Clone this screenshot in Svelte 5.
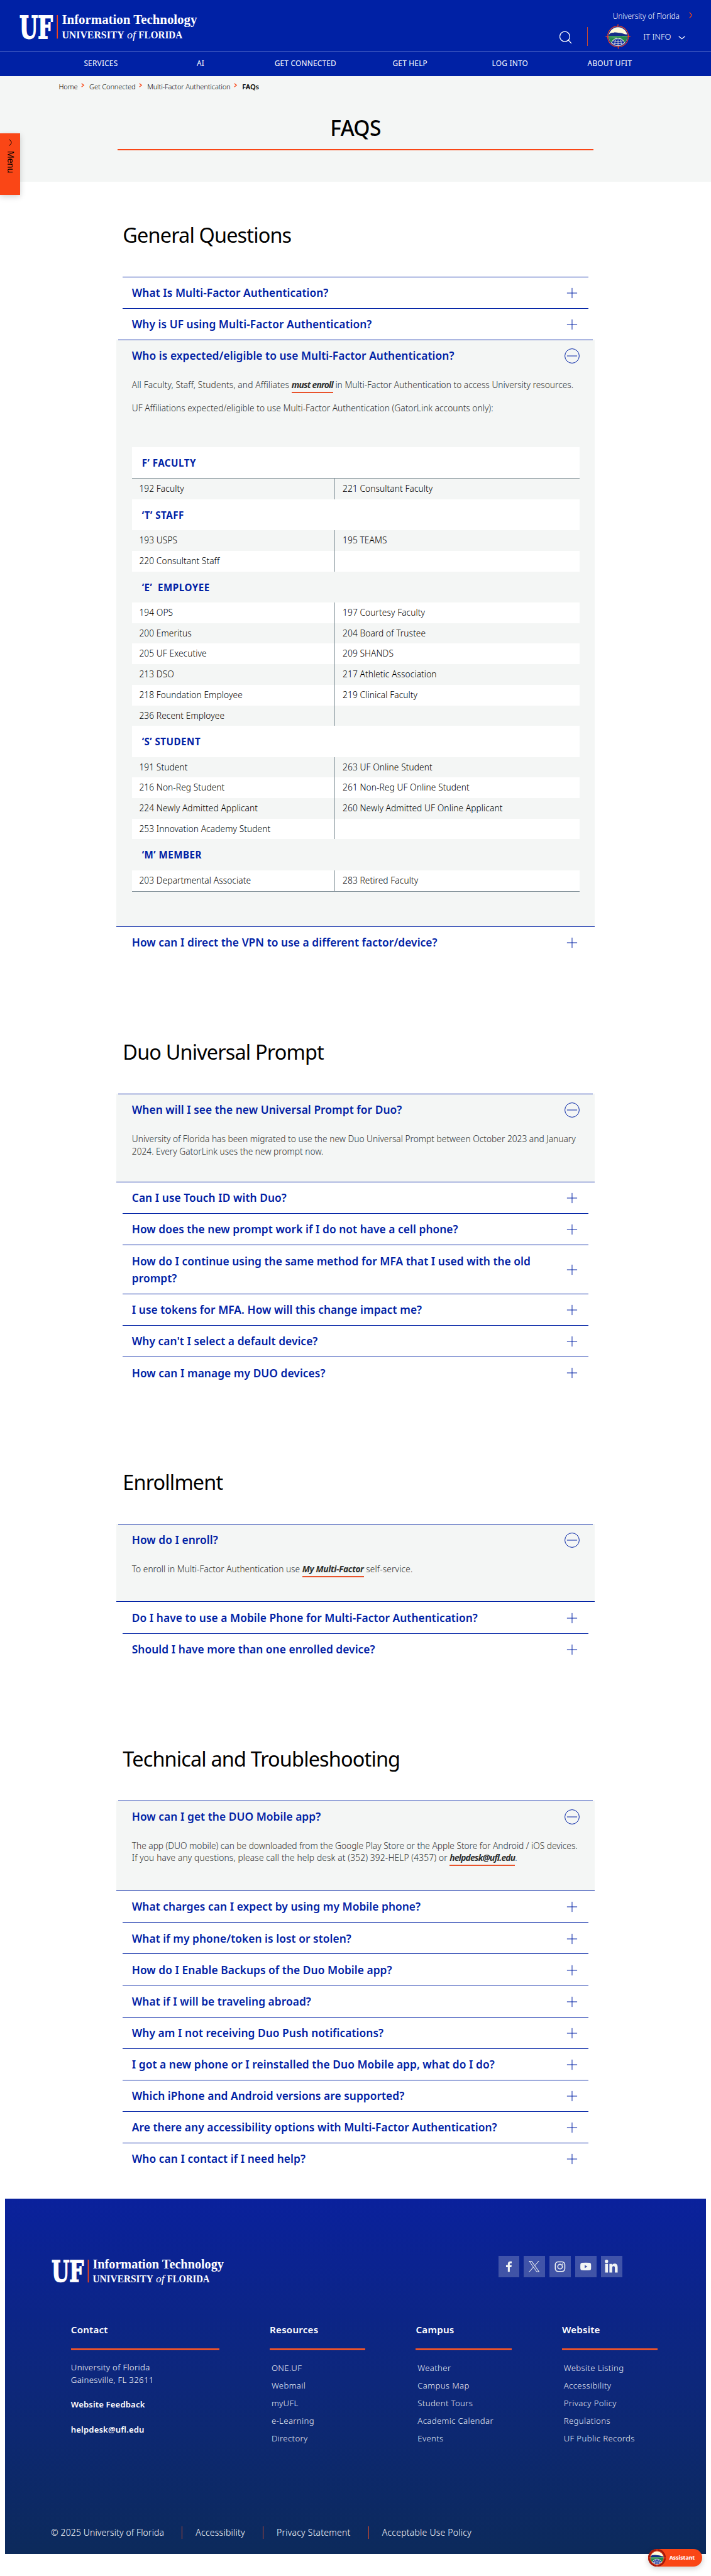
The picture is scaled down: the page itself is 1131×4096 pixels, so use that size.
<script>
  const nav = ['Services', 'AI', 'Get Connected', 'Get Help', 'Log Into', 'About UFIT'];
  const crumbs = ['Home', 'Get Connected', 'Multi-Factor Authentication'];

  const affiliations = [
    { title: 'F’ FACULTY', rows: [['192 Faculty', '221 Consultant Faculty']] },
    { title: '‘T’ STAFF', rows: [['193 USPS', '195 TEAMS'], ['220 Consultant Staff', '']] },
    {
      title: '‘E’\u00a0 EMPLOYEE',
      rows: [
        ['194 OPS', '197 Courtesy Faculty'],
        ['200 Emeritus', '204 Board of Trustee'],
        ['205 UF Executive', '209 SHANDS'],
        ['213 DSO', '217 Athletic Association'],
        ['218 Foundation Employee', '219 Clinical Faculty'],
        ['236 Recent Employee', '']
      ]
    },
    {
      title: '‘S’ STUDENT',
      rows: [
        ['191 Student', '263 UF Online Student'],
        ['216 Non-Reg Student', '261 Non-Reg UF Online Student'],
        ['224 Newly Admitted Applicant', '260 Newly Admitted UF Online Applicant'],
        ['253 Innovation Academy Student', '']
      ]
    },
    { title: '‘M’ MEMBER', rows: [['203 Departmental Associate', '283 Retired Faculty']] }
  ];
  const tableRows = affiliations.flatMap((g) => [{ head: g.title }, ...g.rows.map((cells) => ({ cells }))]);

  const sections = [
    {
      title: 'General Questions',
      open: 2,
      body: 'general',
      items: [
        'What Is Multi-Factor Authentication?',
        'Why is UF using Multi-Factor Authentication?',
        'Who is expected/eligible to use Multi-Factor Authentication?',
        'How can I direct the VPN to use a different factor/device?'
      ]
    },
    {
      title: 'Duo Universal Prompt',
      open: 0,
      body: 'prompt',
      items: [
        'When will I see the new Universal Prompt for Duo?',
        'Can I use Touch ID with Duo?',
        'How does the new prompt work if I do not have a cell phone?',
        'How do I continue using the same method for MFA that I used with the old prompt?',
        'I use tokens for MFA. How will this change impact me?',
        "Why can't I select a default device?",
        'How can I manage my DUO devices?'
      ]
    },
    {
      title: 'Enrollment',
      open: 0,
      body: 'enroll',
      items: [
        'How do I enroll?',
        'Do I have to use a Mobile Phone for Multi-Factor Authentication?',
        'Should I have more than one enrolled device?'
      ]
    },
    {
      title: 'Technical and Troubleshooting',
      open: 0,
      body: 'app',
      items: [
        'How can I get the DUO Mobile app?',
        'What charges can I expect by using my Mobile phone?',
        'What if my phone/token is lost or stolen?',
        'How do I Enable Backups of the Duo Mobile app?',
        'What if I will be traveling abroad?',
        'Why am I not receiving Duo Push notifications?',
        'I got a new phone or I reinstalled the Duo Mobile app, what do I do?',
        'Which iPhone and Android versions are supported?',
        'Are there any accessibility options with Multi-Factor Authentication?',
        'Who can I contact if I need help?'
      ]
    }
  ];

  const linkColumns = [
    { title: 'Resources', links: ['ONE.UF', 'Webmail', 'myUFL', 'e-Learning', 'Directory'] },
    { title: 'Campus', links: ['Weather', 'Campus Map', 'Student Tours', 'Academic Calendar', 'Events'] },
    { title: 'Website', links: ['Website Listing', 'Accessibility', 'Privacy Policy', 'Regulations', 'UF Public Records'] }
  ];
  const legal = ['© 2025 University of Florida', 'Accessibility', 'Privacy Statement', 'Acceptable Use Policy'];
</script>

{#snippet logo()}
  <svg class="logo" viewBox="0 0 405 60" role="img" aria-label="UF Information Technology">
    <text class="uf" x="1.5" y="51.8" textLength="75" lengthAdjust="spacingAndGlyphs">UF</text>
    <rect x="85.6" y="0" width="2.4" height="53" fill="#fa4616" />
    <text class="dept" x="97" y="20.3" textLength="305" lengthAdjust="spacingAndGlyphs">Information Technology</text>
    <text class="univ" x="97" y="52" textLength="141" lengthAdjust="spacingAndGlyphs">UNIVERSITY</text>
    <text class="of" x="244" y="52" textLength="20" lengthAdjust="spacingAndGlyphs">of</text>
    <text class="univ" x="270" y="52" textLength="99" lengthAdjust="spacingAndGlyphs">FLORIDA</text>
  </svg>
{/snippet}

{#snippet scene()}
  <circle r="21" fill="#fffbdc" />
  <path d="M-20.6-4C-18-8-15-9-10-8.6C-6-10-2-8.5 2-8.3C7-8.8 11-6.5 16-5.2L20.4-4.6L20.9-1.5H-20.9Z" fill="#142d87" />
  <path d="M-20.9-1.5H20.9C21 4 19 10 15 14.5C11 5 6 3.8 0 3.8S-11 5-15 14.5C-19 10-21 4-20.9-1.5Z" fill="#22884c" />
  <path d="M-20.5 1Q-6-.5 6 .8M-20 3.6Q-10 2-3 2.2M8-.6H20" stroke="#8fc79b" stroke-width=".7" fill="none" />
  <path d="M-14.8 14.8C-12 7 -6 4 0 4S12 7 14.8 14.8A21 21 0 0 1-14.8 14.8Z" fill="#0021a5" />
  <g stroke="#fffbdc" stroke-width="1.2" fill="none">
    <path d="M-15 14.6C-12 7 -6 4 0 4S12 7 15 14.6A21 21 0 0 1-15 14.6Z" />
    <path d="M0 4V21M-3 4Q-8.500 11-7.500 19.500M3 4Q8.500 11 7.500 19.500M-12 9.500Q0 13 12 9.500M-14.800 14.500Q0 18.500 14.800 14.500" />
  </g>
{/snippet}

<div class="page">
  <header>
    <div class="top">
      {@render logo()}
      <div class="tools">
        <a class="home-link" href="#home"><span>University of Florida</span>
          <svg class="chev" viewBox="0 0 8 15"><path d="M1 .8L6.800 7.300L1 14" /></svg>
        </a>
        <div class="actions">
          <svg class="search" viewBox="0 0 28 30"><circle cx="12" cy="13" r="11.300" /><path d="M20 21L27 28.500" /></svg>
          <i class="bar"></i>
          <svg class="emblem" viewBox="-28.500 -28.500 57 57">
            <circle r="23.400" fill="none" stroke="#fa4616" stroke-width="1.700" stroke-dasharray="33.500 3.250" stroke-dashoffset="-1.600" />
            <path d="M-1.500-22L0-28.500L.8-22ZM22-1.200L28.500 0L22 1.500ZM1.500 22L.5 28.500L-.8 22ZM-22 1.500L-28.500 0L-22-1.200Z" fill="#fa4616" stroke="#fa4616" stroke-width=".6" />
            {@render scene()}
          </svg>
          <span class="info">IT INFO</span>
          <svg class="down" viewBox="0 0 16 8"><path d="M1 1L8 6.600L15 1" /></svg>
        </div>
      </div>
    </div>
    <nav>
      {#each nav as item}<a href="#nav">{item}</a>{/each}
    </nav>
  </header>

  <div class="hero">
    <div class="crumbs">
      {#each crumbs as c}
        <a href="#crumb">{c}</a><svg viewBox="0 0 8 10"><path d="M1 1L6 5L1 9" /></svg>
      {/each}
      <b>FAQs</b>
    </div>
    <h1>FAQS</h1>
  </div>

  <aside class="menu">
    <svg viewBox="0 0 8 16"><path d="M1 .6L7 8L1 15.400" /></svg>
    <span>Menu</span>
  </aside>

  <main>
    {#each sections as s}
      <section>
        <h2>{s.title}</h2>
        {#each s.items as q, i}
          {@const open = i === s.open}
          <div class="item" class:open>
            <div class="question">
              <h3>{q}</h3>
              {#if open}
                <svg class="toggle" viewBox="0 0 34 34"><circle cx="17" cy="17" r="16.200" /><path d="M5.500 17H28.500" /></svg>
              {:else}
                <svg class="toggle" viewBox="0 0 34 34"><path d="M5.500 17H28.500M17 5.500V28.500" /></svg>
              {/if}
            </div>
            {#if open}
              <div class="answer">
                {#if s.body === 'general'}
                  <p class="spaced"><span class="wide">All Faculty, Staff, Students, and Affiliates</span> <a class="tight" href="#enroll">must enroll</a> in Multi-Factor Authentication to access University resources.</p>
                  <p>UF Affiliations expected/eligible to use Multi-Factor Authentication (GatorLink accounts only):</p>
                  <div class="table">
                    {#each tableRows as r}
                      {#if r.head}
                        <div class="thead">{r.head}</div>
                      {:else}
                        <div class="trow"><span>{r.cells[0]}</span><span>{r.cells[1]}</span></div>
                      {/if}
                    {/each}
                  </div>
                {:else if s.body === 'prompt'}
                  <p>University of Florida has been migrated to use the new Duo Universal Prompt between October 2023 and January<br />2024. Every GatorLink uses the new prompt now.</p>
                {:else if s.body === 'enroll'}
                  <p>To enroll in Multi-Factor Authentication use <a href="#mfa">My Multi-Factor</a> <span class="wide">self-service.</span></p>
                {:else}
                  <p class="narrow">The app (DUO mobile) can be downloaded from the Google Play Store or the Apple Store for Android / iOS devices.</p>
                  <p><span class="wide">If you have any questions, please call the help desk at (352) 392-HELP (4357) or</span> <a class="tight" href="#mail">helpdesk@ufl.edu</a>.</p>
                {/if}
              </div>
            {/if}
          </div>
        {/each}
      </section>
    {/each}
  </main>

  <footer>
    <div class="brand">
      {@render logo()}
      <div class="social">
        <a href="#fb" aria-label="Facebook"><svg viewBox="0 0 48 48"><path d="M21 36V25.500H17V21H21V18C21 14 23.400 12.300 26.500 12.300H29.800V16.500H27.600C26 16.500 25.400 17.300 25.400 18.600V21H29.700L29.100 25.500H25.400V36Z" /></svg></a>
        <a href="#x" aria-label="X"><svg viewBox="0 0 48 48"><path fill-rule="evenodd" d="M11.500 11.500H18.300L25.100 21L33.300 11.500H35L25.900 22.100L36 36.500H29.200L22 26.200L13 36.500H11.300L21.200 25.100ZM13.900 12.800L29.800 35.100H33.400L17.600 12.800Z" /></svg></a>
        <a href="#ig" aria-label="Instagram"><svg viewBox="0 0 48 48"><g fill="none" stroke="#f2f5f4" stroke-width="2.200"><rect x="13.200" y="13.500" width="21.500" height="21.500" rx="6.200" /><circle cx="24" cy="24.200" r="5.200" /></g><circle cx="30" cy="18.300" r="1.400" /></svg></a>
        <a href="#yt" aria-label="YouTube"><svg viewBox="0 0 48 48"><path fill-rule="evenodd" d="M15 15.600Q24 14.800 33 15.600Q35.500 16 35.700 19Q36 24 35.700 29Q35.500 32 33 32.300Q24 33 15 32.300Q12 32 11.700 29Q11.300 24 11.700 19Q12 16 15 15.600ZM21.400 20.500V27.500L27.500 24Z" /></svg></a>
        <a href="#in" aria-label="LinkedIn"><svg viewBox="0 0 48 48"><circle cx="12.500" cy="12.300" r="3.800" /><path d="M9.300 18H15.700V37.500H9.300ZM19 18H25V20.700Q27 17.500 31 17.500Q37.600 17.500 37.600 25.500V37.500H31.300V27Q31.300 23 28.400 23Q25.300 23 25.300 27V37.500H19Z" /></svg></a>
      </div>
    </div>
    <div class="columns">
      <div>
        <h4>Contact</h4>
        <div class="contact">
          <p>University of Florida<br />Gainesville, FL 32611</p>
          <a href="#feedback">Website Feedback</a>
          <a href="#help">helpdesk@ufl.edu</a>
        </div>
      </div>
      {#each linkColumns as c}
        <div>
          <h4>{c.title}</h4>
          <ul>{#each c.links as l}<li>{l}</li>{/each}</ul>
        </div>
      {/each}
    </div>
    <div class="legal">
      {#each legal as l}<span>{l}</span>{/each}
    </div>
  </footer>

  <div class="assistant">
    <svg viewBox="-28.500 -28.500 57 57">
      <circle r="28.500" fill="#a3190c" />
      <path d="M0-28V28M-28 0H28" stroke="#fa4616" stroke-width="2" />
      <circle r="22.500" fill="none" stroke="#fa4616" stroke-width="1.600" />
      {@render scene()}
    </svg>
    <span>Assistant</span>
  </div>
</div>

<style>
  /* 1rem stands for ten design pixels */
  :global(html) { font-size: 7.0515px; }
  :global(body) { margin: 0; background: #fff; }
  .page {
    position: relative;
    height: 580.8rem;
    overflow: hidden;
    font-family: 'Noto Sans', 'Open Sans', sans-serif;
    color: #000;
  }
  a { color: inherit; text-decoration: none; }
  h1, h2, h3, h4, p, ul { margin: 0; padding: 0; font-weight: inherit; }
  svg { display: block; flex: none; }

  header { height: 17.2rem; background: #0021a5; color: #fff; }
  .top { box-sizing: border-box; height: 11.6rem; border-bottom: 1px solid #4a63c6; padding-left: 4.2rem; display: flex; justify-content: space-between; }
  .logo { width: 40.5rem; height: 6rem; margin-top: 3.4rem; overflow: visible; fill: #fff; }
  .uf { font: bold 69.5px 'DejaVu Serif', serif; stroke: #fff; stroke-width: 2.5px; }
  .dept { font: bold 30px 'Liberation Serif', serif; }
  .univ { font: bold 23px 'Liberation Serif', serif; }
  .of { font: italic 25px 'Liberation Serif', serif; }
  .home-link { display: flex; justify-content: flex-end; align-items: center; gap: 2.1rem; height: 2.4rem; margin: 2.3rem 4.2rem 0 0; font-size: 1.68rem; font-weight: 300; white-space: nowrap; }
  .chev { width: .8rem; height: 1.5rem; fill: none; stroke: #fa4616; stroke-width: 1.8; }
  .actions { display: flex; align-items: center; height: 5.7rem; margin: .7rem 5.8rem 0 0; }
  .search { width: 2.8rem; height: 3rem; margin-top: .4rem; fill: none; stroke: #fff; stroke-width: 1.8; }
  .bar { width: 1px; height: 4.3rem; margin-left: 3.4rem; background: #c9492f; }
  .emblem { width: 5.7rem; height: 5.7rem; margin-left: 3.9rem; }
  .info { width: 6.3rem; margin-left: 2.9rem; font-size: 1.84rem; font-weight: 300; white-space: nowrap; }
  .down { width: 1.6rem; height: .8rem; margin: .5rem 0 0 1.6rem; fill: none; stroke: #fff; stroke-width: 1.8; }
  nav { display: grid; grid-template-columns: 22.5rem 22.5rem 24.8rem 22.4rem 22.7rem 22.3rem; padding-left: 11.5rem; }
  nav a { text-align: center; text-transform: uppercase; font-size: 1.68rem; line-height: 5.35rem; letter-spacing: .035rem; }

  .hero { height: 23.8rem; background: #f4f6f5; }
  .crumbs { display: flex; padding: 1.25rem 0 0 13.25rem; font-size: 1.58rem; line-height: 2.4rem; font-weight: 300; letter-spacing: -.025rem; }
  .crumbs svg { width: .8rem; height: 1rem; margin: .3rem 1.05rem 0 .8rem; fill: none; stroke: #fa4616; stroke-width: 1.8; }
  .crumbs b { font-weight: 600; }
  h1 { width: 107.4rem; margin: 5rem 0 0 26.5rem; font-size: 4.75rem; font-weight: 500; line-height: 6rem; letter-spacing: -.09rem; text-align: center; padding-bottom: 1.75rem; border-bottom: 2px solid #fa4616; }

  .menu { position: absolute; top: 30rem; left: 0; width: 4.6rem; height: 14rem; background: #fa4616; box-shadow: 0 .4rem 1.4rem rgba(0, 0, 0, .18); }
  .menu svg { width: .8rem; height: 1.6rem; margin: 1.4rem 0 0 1.95rem; fill: none; stroke: #000; stroke-width: 1.3; }
  .menu span { display: block; writing-mode: vertical-rl; margin: 1.05rem 0 0 1.15rem; font: 2rem/2.4rem 'Liberation Sans', sans-serif; }

  main { width: 105rem; margin-left: 27.7rem; }
  section { padding-top: 18.15rem; }
  section:first-child { padding-top: 8.9rem; }
  h2 { margin-bottom: 6.25rem; font-size: 4.6rem; line-height: 6.2rem; letter-spacing: -.12rem; }
  .item { box-sizing: border-box; border-top: 1px solid #0021a5; min-height: 7.1rem; }
  .question { display: flex; align-items: center; justify-content: space-between; padding: 1.6rem 1.95rem 1.42rem 2.05rem; }
  h3 { max-width: 93rem; font-size: 2.46rem; font-weight: 600; line-height: 3.94rem; letter-spacing: .008rem; color: #0021a5; }
  .toggle { width: 3.4rem; height: 3.4rem; fill: none; stroke: #0021a5; stroke-width: 1.4; }
  .open { margin: 0 -1.5rem; border: 0; border-bottom: 1px solid #0021a5; background: #f4f6f5; }
  .open .question { margin: 0 .5rem; padding: 1.6rem 3rem 1.42rem 3.05rem; border-top: 1px solid #0021a5; }
  .open + .item { border-top: 0; min-height: 7.03rem; }
  .answer { padding: 1.7rem 3.5rem 5.43rem 3.55rem; font-size: 1.95rem; font-weight: 300; line-height: 2.78rem; color: #2d2f2f; }
  .answer p { white-space: nowrap; }
  .spaced { margin-bottom: 2.05rem; }
  .wide { letter-spacing: .019rem; }
  .narrow { letter-spacing: -.005rem; }
  .answer a { display: inline-block; padding-bottom: .2rem; border-bottom: 2px solid #e9532b; font-style: italic; font-weight: 700; letter-spacing: -.05rem; }
  .answer a.tight { letter-spacing: -.105rem; }

  .table { margin: 7.35rem 0 2.4rem; border-bottom: 1px solid #84939a; font-size: 1.95rem; letter-spacing: .01rem; color: #000; }
  .table > :nth-child(odd) { background: #fff; }
  .thead { height: 7rem; padding-left: 2.25rem; font-size: 2.15rem; font-weight: 700; line-height: 7.15rem; letter-spacing: .07rem; color: #0021a5; }
  .thead:first-child { border-bottom: 1px solid #84939a; }
  .trow { display: grid; grid-template-columns: 45.9rem 1fr; height: 4.64rem; line-height: 4.64rem; }
  .trow span { box-sizing: border-box; padding-left: 1.65rem; }
  .trow span:first-child { border-right: 1px solid #84939a; }

  footer { box-sizing: border-box; height: 80.1rem; margin: 5.55rem 1.2rem 0 1.15rem; padding: 12.9rem 0 0 10.35rem; background: linear-gradient(#0a219c, #0d277c 50%, #0c2a5b); color: #fff; }
  .brand { display: flex; height: 6.4rem; }
  footer .logo { width: 39.3rem; height: 5.82rem; margin-top: .8rem; }
  .social { display: flex; gap: 1rem; margin-left: 61.6rem; }
  .social a { width: 4.8rem; height: 4.8rem; background: rgba(255, 255, 255, .22); }
  .social svg { width: 4.8rem; height: 4.8rem; fill: #f2f5f4; }
  .columns { display: grid; grid-template-columns: 33.5rem 21.6rem 21.6rem 21.6rem; gap: 11.36rem; padding-left: 4.5rem; margin-top: 8.8rem; height: 28.2rem; }
  h4 { font-size: 2.15rem; font-weight: 600; line-height: 3rem; letter-spacing: .03rem; padding-bottom: 2.7rem; border-bottom: 3px solid #e9532b; }
  .contact { padding-top: 2.35rem; font-size: 1.87rem; line-height: 2.84rem; letter-spacing: .05rem; font-weight: 300; }
  .contact a { display: block; margin-top: 2.76rem; font-size: 1.86rem; font-weight: 600; letter-spacing: .02rem; }
  ul { list-style: none; padding: 1.9rem 0 0 .4rem; font-size: 1.87rem; font-weight: 300; line-height: 4rem; letter-spacing: .05rem; color: #e8ecf5; white-space: nowrap; }
  .legal { display: flex; margin-top: 17.6rem; font-size: 1.98rem; font-weight: 300; line-height: 2.8rem; letter-spacing: .035rem; }
  .legal span { padding-right: 3.98rem; }
  .legal span:first-child { letter-spacing: .02rem; }
  .legal span + span { border-left: 1px solid #c9492f; padding-left: 3rem; }

  .assistant { position: absolute; right: 2rem; top: 574.8rem; display: flex; align-items: center; width: 12.2rem; height: 4rem; border-radius: 2rem; background: #fa4616; box-shadow: 0 .4rem 1.4rem rgba(0, 0, 0, .2); color: #fff; }
  .assistant svg { width: 4rem; height: 4rem; }
  .assistant span { margin-left: .8rem; font-size: 1.22rem; font-weight: 800; }
</style>
